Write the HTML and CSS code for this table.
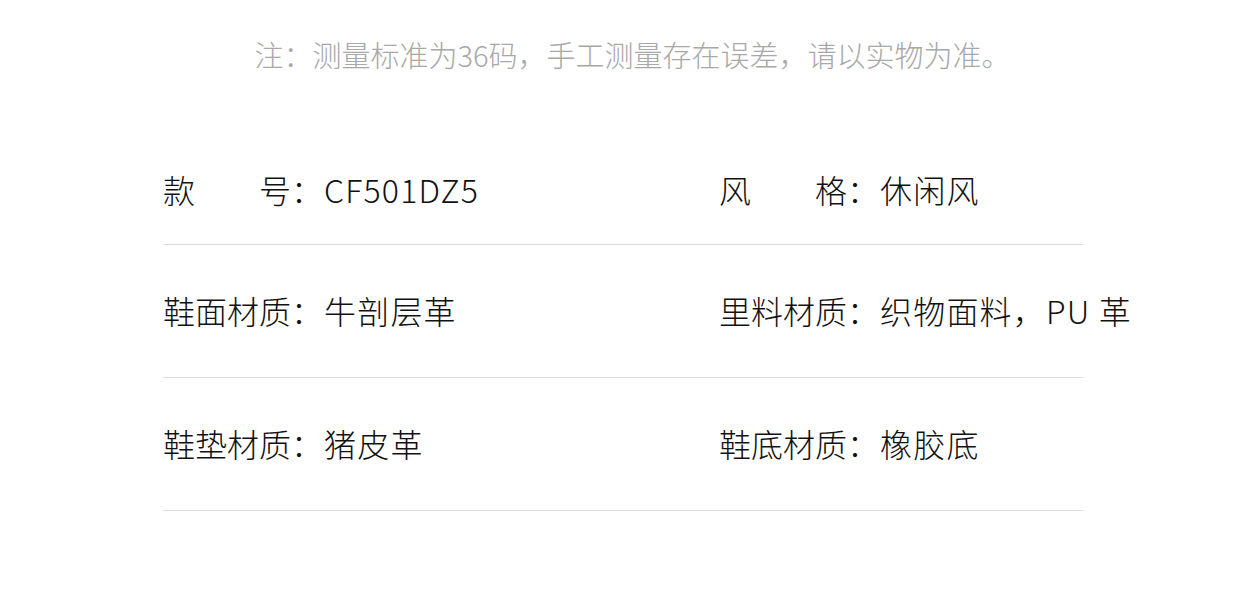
FILE: index.html
```html
<!DOCTYPE html>
<html lang="zh-CN">
<head>
<meta charset="utf-8">
<title>商品参数</title>
<link rel="stylesheet" href="styles.css">
</head>
<body>
<div class="page">
  <p class="note">注：测量标准为36码，手工测量存在误差，请以实物为准。</p>
  <div class="specs">
    <div class="row row-first">
      <div class="cell"><span class="label">款　　号：</span><span class="value">CF501DZ5</span></div>
      <div class="cell"><span class="label">风　　格：</span><span class="value">休闲风</span></div>
    </div>
    <div class="row">
      <div class="cell"><span class="label">鞋面材质：</span><span class="value">牛剖层革</span></div>
      <div class="cell"><span class="label">里料材质：</span><span class="value">织物面料，PU 革</span></div>
    </div>
    <div class="row">
      <div class="cell"><span class="label">鞋垫材质：</span><span class="value">猪皮革</span></div>
      <div class="cell"><span class="label">鞋底材质：</span><span class="value">橡胶底</span></div>
    </div>
  </div>
</div>
</body>
</html>
```

FILE: styles.css
```css
* { box-sizing: border-box; }
html, body {
  margin: 0;
  padding: 0;
  background: #ffffff;
}
body {
  font-family: "Noto Sans CJK SC", "Noto Sans", sans-serif;
  font-weight: 300;
  color: #111111;
}
.page {
  width: 1242px;
  height: 602px;
  overflow: hidden;
}
.note {
  margin: 0;
  padding: 40px 0 0 23px;
  font-size: 29px;
  line-height: 29px;
  color: #a8a8a8;
  text-align: center;
}
.specs {
  margin: 104px 0 0 163px;
  width: 920px;
}
.row {
  display: grid;
  grid-template-columns: 556px 1fr;
  padding: 49px 0 51px;
  border-bottom: 1px solid #dedede;
  font-size: 32px;
  line-height: 32px;
  white-space: nowrap;
}
.row-first {
  padding: 0 0 39px;
}
.cell {
  display: flex;
}
.value {
  padding-left: 1px;
  letter-spacing: 1.2px;
}
```
